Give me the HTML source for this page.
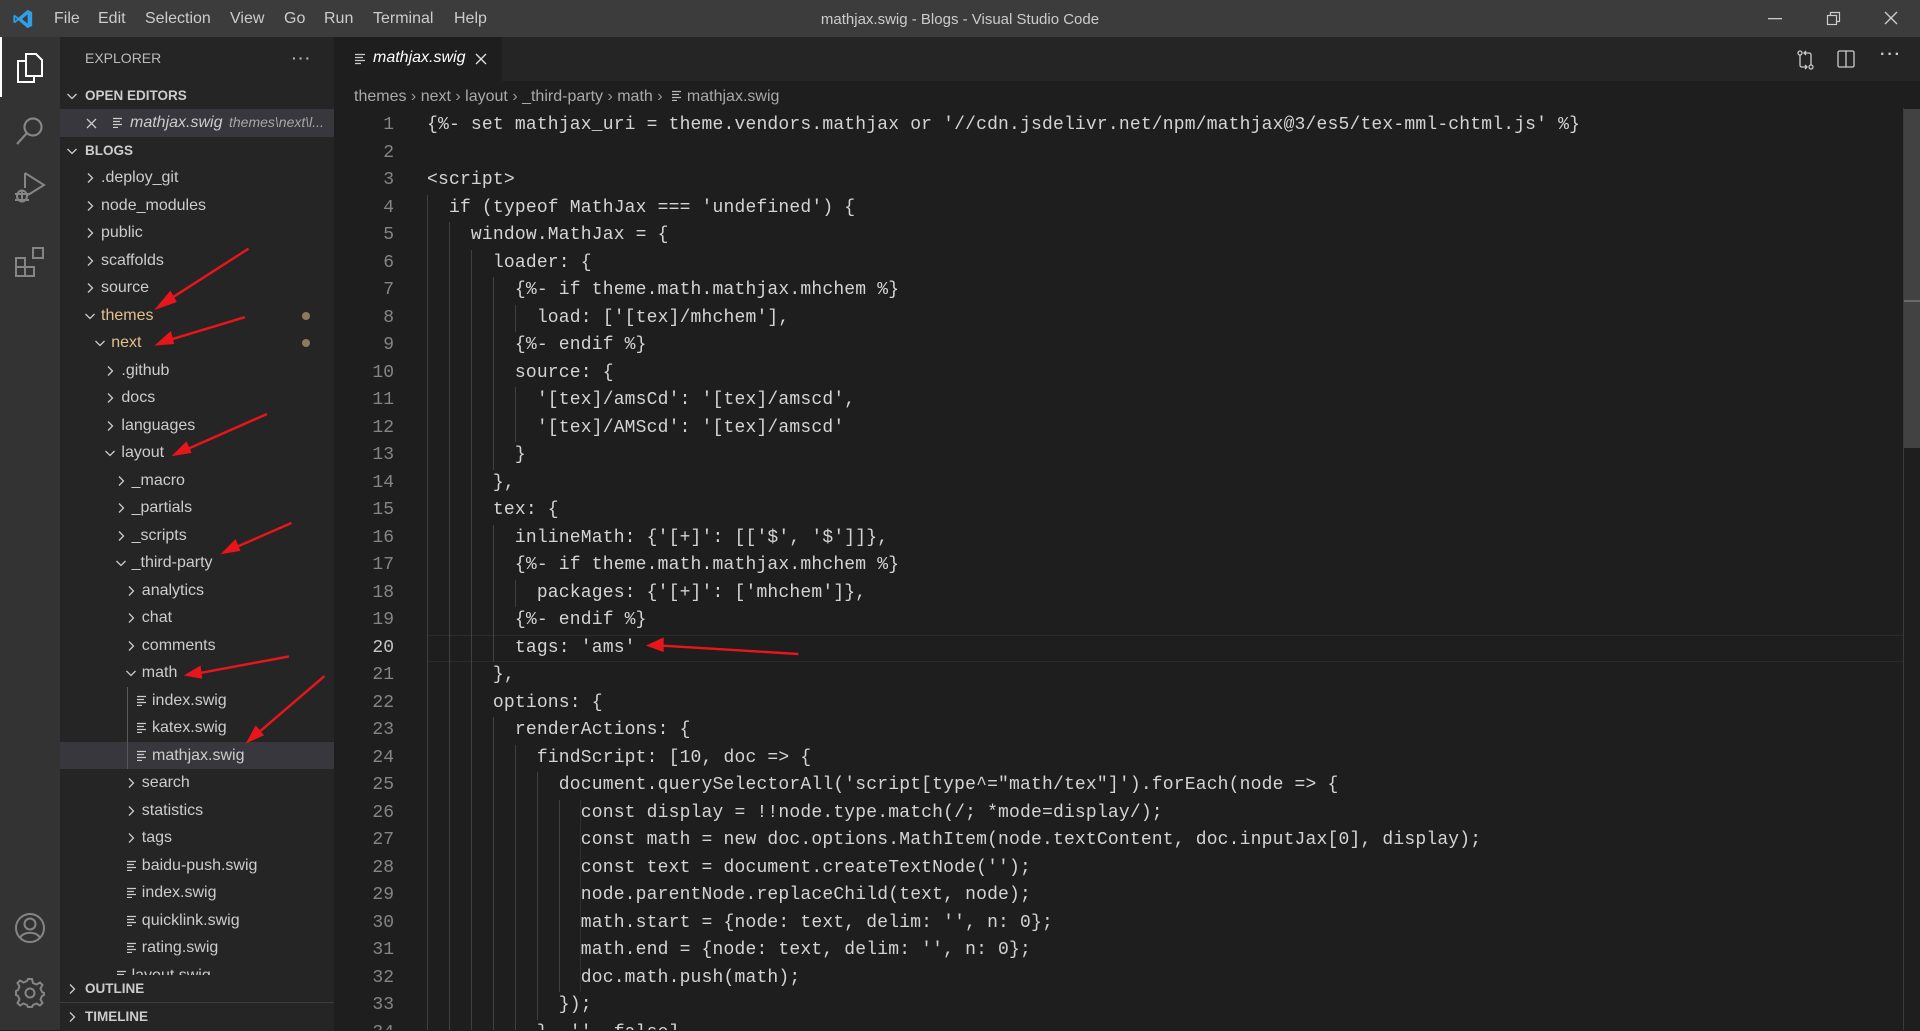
<!DOCTYPE html>
<html><head><meta charset="utf-8"><style>
*{margin:0;padding:0;box-sizing:border-box}
body{width:1920px;height:1030px;overflow:hidden;background:#1e1e1e;font-family:"Liberation Sans",sans-serif;position:relative}
.abs{position:absolute}
#title{left:0;top:0;width:1920px;height:37px;background:#3c3c3c;color:#ccc;font-size:16px}
#title span{position:absolute;top:10px}
#act{left:0;top:37px;width:60px;height:993px;background:#333}
#side{left:60px;top:37px;width:274px;height:993px;background:#252526;color:#ccc;font-size:16px}
.row{position:absolute;left:0;width:274px;height:27.5px;line-height:27.5px;white-space:nowrap}
.row .t{position:absolute}
.row svg{position:absolute;top:8px}
.hdr{font-weight:bold;font-size:13.5px;color:#ccc}
#tabs{left:334px;top:37px;width:1586px;height:44px;background:#252526}
#code{left:334px;top:112px;width:1569px;height:918px;overflow:hidden;font-family:"Liberation Mono",monospace;font-size:18px;color:#d4d4d4;letter-spacing:0.18px}
.ln{position:absolute;left:0;width:1569px;height:27.5px;line-height:27.5px;white-space:pre}
.ln .n{position:absolute;right:1509px;color:#858585;text-align:right;letter-spacing:0}
.ln .c{position:absolute;left:93px;height:27.5px}
.cur{position:absolute;left:93px;right:0;top:0;height:27.5px;border-top:1px solid #2a2a2a;border-bottom:1px solid #2a2a2a}
.g{position:absolute;left:93px;top:0;height:27.5px;background-image:repeating-linear-gradient(to right,#404040 0 1px,transparent 1px 21.96px);}
</style></head><body>

<div id="title" class="abs">
<svg style="position:absolute;left:12px;top:8px" width="22" height="22" viewBox="0 0 24 24"><path d="M17 2 L22 4.5 V19.5 L17 22 L7 13.5 L3 16.5 L1.5 15.5 V8.5 L3 7.5 L7 10.5 Z M17 7 L11 12 L17 17 Z M3.5 10 V14 L5.5 12Z" fill="#2e9fe8"/></svg>
<span style="left:54px">File</span><span style="left:98px">Edit</span><span style="left:145px">Selection</span><span style="left:230px">View</span><span style="left:284px">Go</span><span style="left:324px">Run</span><span style="left:373px">Terminal</span><span style="left:454px">Help</span>
<span style="left:0;width:1920px;text-align:center;font-size:15px;top:11px">mathjax.swig - Blogs - Visual Studio Code</span>
<svg style="position:absolute;left:1768px;top:18px" width="16" height="2"><rect width="14" height="1.3" fill="#ccc"/></svg>
<svg style="position:absolute;left:1826px;top:11px" width="16" height="16" viewBox="0 0 16 16" fill="none" stroke="#ccc" stroke-width="1.2"><rect x="1.5" y="4.5" width="9" height="9"/><path d="M4.5 4.5V1.5H13.5V10.5H10.5"/></svg>
<svg style="position:absolute;left:1883px;top:10px" width="16" height="16" viewBox="0 0 16 16" stroke="#ccc" stroke-width="1.4"><path d="M2 2L14 14M14 2L2 14"/></svg>
</div>

<div id="act" class="abs">
<div class="abs" style="left:0;top:0;width:2px;height:60px;background:#fff"></div>
<svg class="abs" style="left:15px;top:15px" width="30" height="32" viewBox="0 0 30 32" fill="none" stroke="#fff" stroke-width="2"><path d="M11 2H21L27 8V24H11Z"/><path d="M11 9H3V30H19V24"/></svg>
<svg class="abs" style="left:15px;top:78px" width="30" height="32" viewBox="0 0 30 32" fill="none" stroke="#858585" stroke-width="2.2"><circle cx="18" cy="12" r="8.5"/><path d="M12 18L2 29"/></svg>
<svg class="abs" style="left:14px;top:133px" width="32" height="34" viewBox="0 0 32 34" fill="none" stroke="#858585" stroke-width="2"><path d="M11 3V18M11 3L30 15L14 25"/><ellipse cx="8" cy="26" rx="5" ry="5.5"/><path d="M1 24H15M1 30H15M8 21V31"/></svg>
<svg class="abs" style="left:15px;top:210px" width="30" height="32" viewBox="0 0 30 32" fill="none" stroke="#858585" stroke-width="2"><rect x="1" y="11" width="9" height="9"/><rect x="1" y="20" width="9" height="9"/><rect x="10" y="20" width="9" height="9"/><rect x="18" y="1" width="10" height="10"/></svg>
<svg class="abs" style="left:14px;top:875px" width="32" height="32" viewBox="0 0 32 32" fill="none" stroke="#858585" stroke-width="2"><circle cx="16" cy="16" r="14"/><circle cx="16" cy="12" r="5.5"/><path d="M6 26C9 19 23 19 26 26"/></svg>
<svg class="abs" style="left:14px;top:940px" width="32" height="32" viewBox="0 0 32 32" fill="none" stroke="#858585" stroke-width="2"><circle cx="16" cy="16" r="4.5"/><path d="M14 2H18L19 6L22.5 7.5L26 5.5L28.5 8L26.5 11.5L28 15L30 16V18L28 19L26.5 22.5L28.5 26L26 28.5L22.5 26.5L19 28L18 30H14L13 28L9.5 26.5L6 28.5L3.5 26L5.5 22.5L4 19L2 18V14L4 13L5.5 9.5L3.5 6L6 3.5L9.5 5.5L13 4Z"/></svg>
</div>

<div id="side" class="abs">
<div class="row" style="top:8px;font-size:14px;color:#bbb"><span class="t" style="left:25px">EXPLORER</span><span class="t" style="left:232px;letter-spacing:2px;font-weight:bold">···</span></div>
<div class="row hdr" style="top:45px"><svg style="left:6px" width="12" height="12" viewBox="0 0 12 12" fill="none" stroke="#ccc" stroke-width="1.3"><path d="M1.5 4L6 8.5L10.5 4"/></svg><span class="t" style="left:25px">OPEN EDITORS</span></div>
<div class="row" style="top:72px;background:#37373d;font-style:italic"><svg style="left:26px;top:9px" width="11" height="11" viewBox="0 0 11 11" stroke="#ccc" stroke-width="1.3"><path d="M1 1L10 10M10 1L1 10"/></svg><svg style="left:52px;top:8px" width="11" height="11" viewBox="0 0 11 11" stroke="#ccc" stroke-width="1.2"><path d="M1 1.5H10M1 4.5H8M1 7.5H10M1 10.5H6"/></svg><span class="t" style="left:70px">mathjax.swig</span><span class="t" style="left:169px;font-size:14px;color:#a8a8a8">themes\next\l...</span></div>
<div class="row hdr" style="top:100px"><svg style="left:6px" width="12" height="12" viewBox="0 0 12 12" fill="none" stroke="#ccc" stroke-width="1.3"><path d="M1.5 4L6 8.5L10.5 4"/></svg><span class="t" style="left:25px">BLOGS</span></div>
<div id="tree"></div>
<div class="abs" style="left:67px;top:650px;width:1px;height:82px;background:#585858"></div>
<div class="abs" style="left:0;top:938px;width:274px;height:1px;background:#3c3c3c"></div>
<div class="row hdr" style="top:938px;background:#252526"><svg style="left:6px" width="12" height="12" viewBox="0 0 12 12" fill="none" stroke="#ccc" stroke-width="1.3"><path d="M4 1.5L8.5 6L4 10.5"/></svg><span class="t" style="left:25px">OUTLINE</span></div>
<div class="abs" style="left:0;top:965px;width:274px;height:1px;background:#3c3c3c"></div>
<div class="row hdr" style="top:966px;background:#252526"><svg style="left:6px" width="12" height="12" viewBox="0 0 12 12" fill="none" stroke="#ccc" stroke-width="1.3"><path d="M4 1.5L8.5 6L4 10.5"/></svg><span class="t" style="left:25px">TIMELINE</span></div>
</div>

<div id="tabs" class="abs">
<div class="abs" style="left:0;top:0;width:168px;height:44px;background:#1e1e1e"></div>
<svg class="abs" style="left:20px;top:16px" width="12" height="12" viewBox="0 0 12 12" stroke="#ccc" stroke-width="1.2"><path d="M1 1.5H11M1 4.5H9M1 7.5H11M1 10.5H7"/></svg>
<span class="abs" style="left:39px;top:12px;color:#fff;font-style:italic;font-size:16px">mathjax.swig</span>
<svg class="abs" style="left:141px;top:16px" width="12" height="12" viewBox="0 0 12 12" stroke="#ddd" stroke-width="1.4"><path d="M1 1L11 11M11 1L1 11"/></svg>
<svg class="abs" style="left:1462px;top:13px" width="20" height="20" viewBox="0 0 20 20" fill="none" stroke="#ccc" stroke-width="1.3"><circle cx="4" cy="3" r="2"/><circle cx="15" cy="17" r="2"/><path d="M4 5V15Q4 17 6 17H11M9 15L11 17L9 19M15 15V5Q15 3 13 3H8M10 1L8 3L10 5"/></svg>
<svg class="abs" style="left:1503px;top:13px" width="18" height="18" viewBox="0 0 18 18" fill="none" stroke="#ccc" stroke-width="1.3"><rect x="1" y="1" width="16" height="16" rx="1.5"/><path d="M9 1V17"/></svg>
<span class="abs" style="left:1546px;top:9px;color:#ccc;font-weight:bold;letter-spacing:2px">···</span>
</div>

<div class="abs" style="left:354px;top:88px;color:#a9a9a9;font-size:16px;white-space:nowrap">themes <span style="color:#999">›</span> next <span style="color:#999">›</span> layout <span style="color:#999">›</span> _third-party <span style="color:#999">›</span> math <span style="color:#999">›</span> &nbsp;<svg width="11" height="11" viewBox="0 0 11 11" stroke="#bbb" stroke-width="1.2"><path d="M1 1.5H10M1 4.5H8M1 7.5H10M1 10.5H6"/></svg> mathjax.swig</div>

<div id="code" class="abs"></div>
<div class="abs" style="left:1903px;top:108px;width:1px;height:922px;background:#3a3a3a"></div>
<div class="abs" style="left:1904px;top:109px;width:16px;height:339px;background:#424242"></div>
<div class="abs" style="left:1904px;top:300px;width:16px;height:2px;background:#6a6a6a"></div>

<svg class="abs" style="left:0;top:0" width="1920" height="1030" viewBox="0 0 1568 841" preserveAspectRatio="none">
<g stroke="#e8151b" stroke-width="2" fill="#e8151b">
<line x1="203" y1="203" x2="136" y2="246"/><polygon points="129,251 139,239 143,246"/>
<line x1="200" y1="259" x2="137" y2="278"/><polygon points="129,281 139,272 141,280"/>
<line x1="218" y1="338" x2="150" y2="368"/><polygon points="143,371 152,362 155,369"/>
<line x1="238" y1="427" x2="190" y2="448"/><polygon points="183,451 192,442 195,449"/>
<line x1="236" y1="536" x2="161" y2="550"/><polygon points="153,551 163,545 164,553"/>
<line x1="265" y1="552" x2="209" y2="600"/><polygon points="203,605 209,594 214,600"/>
<line x1="652" y1="534" x2="538" y2="527"/><polygon points="530,527 541,522 541,531"/>
</g></svg>

<script>
var tree=[
['.deploy_git',0,'c'],['node_modules',0,'c'],['public',0,'c'],['scaffolds',0,'c'],['source',0,'c'],
['themes',0,'o',1],['next',1,'o',1],['.github',2,'c'],['docs',2,'c'],['languages',2,'c'],['layout',2,'o'],
['_macro',3,'c'],['_partials',3,'c'],['_scripts',3,'c'],['_third-party',3,'o'],['analytics',4,'c'],['chat',4,'c'],
['comments',4,'c'],['math',4,'o'],['index.swig',5,'f'],['katex.swig',5,'f'],['mathjax.swig',5,'f',0,1],
['search',4,'c'],['statistics',4,'c'],['tags',4,'c'],['baidu-push.swig',4,'f'],['index.swig',4,'f'],
['quicklink.swig',4,'f'],['rating.swig',4,'f'],['layout.swig',3,'f']];
var h='';
tree.forEach(function(r,k){
 var top=127+27.5*k, L=r[1], cx=24+10.2*L, tx=41+10.2*L;
 var col=r[3]?'#e2c08d':'#ccc';
 h+='<div class="row" style="top:'+top+'px;'+(r[4]?'background:#37373d;':'')+'color:'+col+'">';
 if(r[2]=='c') h+='<svg style="left:'+cx+'px" width="12" height="12" viewBox="0 0 12 12" fill="none" stroke="#ccc" stroke-width="1.3"><path d="M4 1.5L8.5 6L4 10.5"/></svg>';
 else if(r[2]=='o') h+='<svg style="left:'+cx+'px" width="12" height="12" viewBox="0 0 12 12" fill="none" stroke="#ccc" stroke-width="1.3"><path d="M1.5 4L6 8.5L10.5 4"/></svg>';
 else h+='<svg style="left:'+(cx+1)+'px" width="11" height="11" viewBox="0 0 11 11" stroke="#ccc" stroke-width="1.2"><path d="M1 1.5H10M1 4.5H8M1 7.5H10M1 10.5H6"/></svg>';
 h+='<span class="t" style="left:'+tx+'px">'+r[0]+'</span>';
 if(r[3]) h+='<span class="abs" style="left:242px;top:10px;width:8px;height:8px;border-radius:4px;background:#8d7a5c"></span>';
 h+='</div>';
});
document.getElementById('tree').innerHTML=h;
var code=[
[0,"{%- set mathjax_uri = theme.vendors.mathjax or '//cdn.jsdelivr.net/npm/mathjax@3/es5/tex-mml-chtml.js' %}"],
[0,""],[0,"<script>"],[1,"if (typeof MathJax === 'undefined') {"],[2,"window.MathJax = {"],[3,"loader: {"],
[4,"{%- if theme.math.mathjax.mhchem %}"],[5,"load: ['[tex]/mhchem'],"],[4,"{%- endif %}"],[4,"source: {"],
[5,"'[tex]/amsCd': '[tex]/amscd',"],[5,"'[tex]/AMScd': '[tex]/amscd'"],[4,"}"],[3,"},"],[3,"tex: {"],
[4,"inlineMath: {'[+]': [['$', '$']]},"],[4,"{%- if theme.math.mathjax.mhchem %}"],[5,"packages: {'[+]': ['mhchem']},"],
[4,"{%- endif %}"],[4,"tags: 'ams'"],[3,"},"],[3,"options: {"],[4,"renderActions: {"],[5,"findScript: [10, doc => {"],
[6,"document.querySelectorAll('script[type^=\"math/tex\"]').forEach(node => {"],
[7,"const display = !!node.type.match(/; *mode=display/);"],
[7,"const math = new doc.options.MathItem(node.textContent, doc.inputJax[0], display);"],
[7,"const text = document.createTextNode('');"],[7,"node.parentNode.replaceChild(text, node);"],
[7,"math.start = {node: text, delim: '', n: 0};"],[7,"math.end = {node: text, delim: '', n: 0};"],
[7,"doc.math.push(math);"],[6,"});"],[5,"}, '', false]"]];
var e=function(s){return s.replace(/&/g,'&amp;').replace(/</g,'&lt;').replace(/>/g,'&gt;');};
var c='';
code.forEach(function(r,i){
 var n=i+1, cur=n==20;
 c+='<div class="ln" style="top:'+(i*27.5)+'px">';
 if(cur) c+='<div class="cur"></div>';
 c+='<span class="n" style="'+(cur?'color:#c6c6c6':'')+'">'+n+'</span>';
 if(r[0]>0) c+='<div class="g" style="width:'+(r[0]*21.96)+'px"></div>';
 c+='<span class="c">'+'  '.repeat(r[0])+e(r[1])+'</span></div>';
});
document.getElementById('code').innerHTML=c;
</script>
</body></html>
